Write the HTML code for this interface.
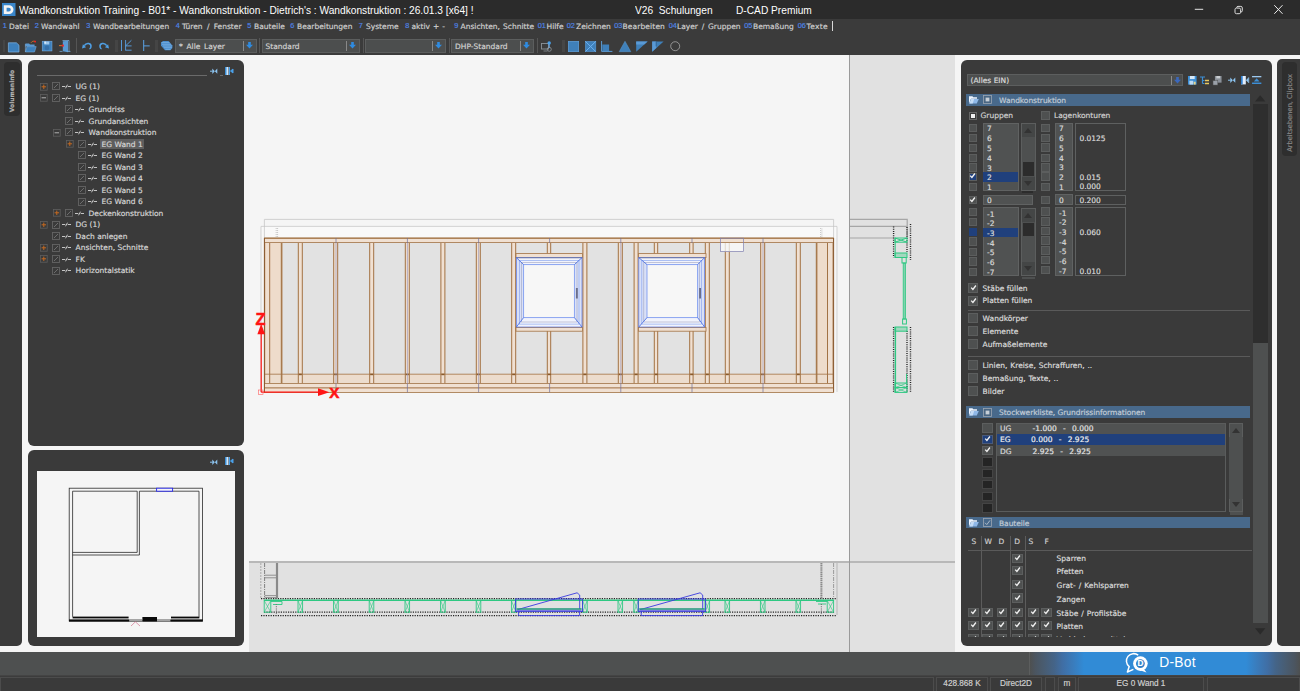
<!DOCTYPE html><html lang="de"><head><meta charset="utf-8"><title>Wandkonstruktion Training</title><style>
html,body{margin:0;padding:0}
body{width:1300px;height:691px;position:relative;overflow:hidden;background:#f5f5f5;font-family:"DejaVu Sans","Liberation Sans",sans-serif;font-size:7.5px;color:#d2d2d2}
.a{position:absolute}
.t{position:absolute;white-space:pre;line-height:10px;height:10px;margin-top:1px;-webkit-text-stroke:.18px}
.pnl{position:absolute;background:#3a3a3a;border-radius:6px}
.cb{position:absolute;background:#4e5050;border:1px solid #5c5e5e;box-sizing:border-box}
.cbd{position:absolute;background:#242424;border:1px solid #444;box-sizing:border-box}
.hd{position:absolute;background:#48698b;height:11.4px;left:966px;width:284px}
.num{color:#4f84e6;font-size:7.3px;font-family:'Liberation Sans',sans-serif}
.sep{position:absolute;background:#5a5a5a;height:1px}
.combo{position:absolute;background:#4c4e4e;border:1px solid #5c5e5e;box-sizing:border-box}
svg{position:absolute;overflow:visible}
.lb{position:absolute;background:#505252;border:1px solid #606262;box-sizing:border-box}
</style></head><body>
<div class="a" style="left:0;top:0;width:1300px;height:19px;background:#2b2b2b"></div>
<svg style="left:1.600px;top:2.900px" width="13.500" height="13" viewBox="0 0 13.500 13"><rect width="13.500" height="13" fill="#3a86ca"/><path d="M1.800 2.300h5.400a4.300 4.300 0 0 1 0 8.600h-5.400z M4.600 4.700v3.800h2.300a1.900 1.900 0 0 0 0-3.800z" fill="#f4f4f4" fill-rule="evenodd"/></svg>
<div class="t" style="left:19.4px;top:2px;font-family:'Liberation Sans',sans-serif;font-size:11.6px;color:#fff;line-height:14px;height:14px;transform:scaleX(.878);transform-origin:0 0;-webkit-text-stroke:0">Wandkonstruktion Training - B01* - Wandkonstruktion - Dietrich's : Wandkonstruktion : 26.01.3 [x64] !</div>
<div class="t" style="left:635px;top:2px;font-family:'Liberation Sans',sans-serif;font-size:11.6px;color:#fff;line-height:14px;height:14px;transform:scaleX(.878);transform-origin:0 0;-webkit-text-stroke:0">V26  Schulungen</div>
<div class="t" style="left:735.5px;top:2px;font-family:'Liberation Sans',sans-serif;font-size:11.6px;color:#fff;line-height:14px;height:14px;transform:scaleX(.878);transform-origin:0 0;-webkit-text-stroke:0">D-CAD Premium</div>
<svg style="left:1190px;top:0" width="110" height="19" viewBox="1190 0 110 19"><path d="M1194.800 9.300h8.400" stroke="#e4e4e4" stroke-width="1" fill="none"/><rect x="1235" y="8.100" width="5.600" height="5.600" rx="1.400" stroke="#dcdcdc" stroke-width="1" fill="none"/><path d="M1236.700 7.900v-.2a1.300 1.300 0 0 1 1.300-1.300h2.800a1.500 1.500 0 0 1 1.500 1.500v2.800a1.300 1.300 0 0 1-1.300 1.300h-.2" stroke="#dcdcdc" stroke-width="1" fill="none"/><path d="M1274.300 5.200l8.200 8.600M1282.500 5.200l-8.200 8.600" stroke="#ececec" stroke-width="1" fill="none"/></svg>
<div class="a" style="left:0;top:19px;width:1300px;height:35.700px;background:#3b3b3b"></div>
<div class="t num" style="left:2.7px;top:19.600px">1</div>
<div class="t" style="left:9px;top:20.5px;color:#cfcfcf;word-spacing:0px;letter-spacing:0px">Datei</div>
<div class="t num" style="left:34.7px;top:19.600px">2</div>
<div class="t" style="left:41px;top:20.5px;color:#cfcfcf;word-spacing:0px;letter-spacing:0px">Wandwahl</div>
<div class="t num" style="left:86.2px;top:19.600px">3</div>
<div class="t" style="left:93px;top:20.5px;color:#cfcfcf;word-spacing:0px;letter-spacing:0px">Wandbearbeitungen</div>
<div class="t num" style="left:175.7px;top:19.600px">4</div>
<div class="t" style="left:182px;top:20.5px;color:#cfcfcf;word-spacing:1.9px;letter-spacing:0px">Türen / Fenster</div>
<div class="t num" style="left:247.2px;top:19.600px">5</div>
<div class="t" style="left:254px;top:20.5px;color:#cfcfcf;word-spacing:0px;letter-spacing:0px">Bauteile</div>
<div class="t num" style="left:290.2px;top:19.600px">6</div>
<div class="t" style="left:297px;top:20.5px;color:#cfcfcf;word-spacing:0px;letter-spacing:0px">Bearbeitungen</div>
<div class="t num" style="left:358.7px;top:19.600px">7</div>
<div class="t" style="left:366px;top:20.5px;color:#cfcfcf;word-spacing:0px;letter-spacing:0px">Systeme</div>
<div class="t num" style="left:405.2px;top:19.600px">8</div>
<div class="t" style="left:411.5px;top:20.5px;color:#cfcfcf;word-spacing:0.65px;letter-spacing:0px">aktiv + -</div>
<div class="t num" style="left:454.2px;top:19.600px">9</div>
<div class="t" style="left:460.5px;top:20.5px;color:#cfcfcf;word-spacing:0.7px;letter-spacing:0px">Ansichten, Schnitte</div>
<div class="t num" style="left:537.7px;top:19.600px">01</div>
<div class="t" style="left:546.5px;top:20.5px;color:#cfcfcf;word-spacing:0px;letter-spacing:0px">Hilfe</div>
<div class="t num" style="left:566.7px;top:19.600px">02</div>
<div class="t" style="left:576px;top:20.5px;color:#cfcfcf;word-spacing:0px;letter-spacing:0px">Zeichnen</div>
<div class="t num" style="left:614.2px;top:19.600px">03</div>
<div class="t" style="left:622.5px;top:20.5px;color:#cfcfcf;word-spacing:0px;letter-spacing:0.13px">Bearbeiten</div>
<div class="t num" style="left:668.7px;top:19.600px">04</div>
<div class="t" style="left:677px;top:20.5px;color:#cfcfcf;word-spacing:1.4px;letter-spacing:0px">Layer / Gruppen</div>
<div class="t num" style="left:744.2px;top:19.600px">05</div>
<div class="t" style="left:753px;top:20.5px;color:#cfcfcf;word-spacing:0px;letter-spacing:0px">Bemaßung</div>
<div class="t num" style="left:797.7px;top:19.600px">06</div>
<div class="t" style="left:806.5px;top:20.5px;color:#cfcfcf;word-spacing:0px;letter-spacing:0.35px">Texte</div>
<div class="a" style="left:832px;top:21px;width:1px;height:10px;background:#d8d8d8"></div>
<div class="a" style="left:2.800px;top:40px;width:2.200px;height:11.500px;background:#454545"></div>
<svg style="left:8px;top:41.500px" width="11.400" height="10.400" viewBox="0 0 11.400 10.400"><path d="M.4 .800h8l2.600 2.400v6.800h-10.600z" fill="#3d80bc" stroke="#7fb4e4" stroke-width=".7"/></svg>
<svg style="left:25px;top:39.500px" width="12" height="12.500" viewBox="0 0 12 12.500"><path d="M.4 3.600h3.600l1 1h4.600v2h-9.200z" fill="#5a9ad4"/><path d="M.4 12l1.500-5.400h9.300l-1.700 5.400z" fill="#3d80bc" stroke="#7fb4e4" stroke-width=".5"/><path d="M.4 4v8" stroke="#7fb4e4" stroke-width=".6"/><path d="M6 2.800c1-1.600 2.600-2 4-1.400" stroke="#c8702a" stroke-width=".9" fill="none"/><rect x="9.200" y=".800" width="1.800" height="1.600" fill="#f02020"/></svg>
<svg style="left:42.300px;top:41px" width="10.200" height="10.200" viewBox="0 0 10.200 10.200"><rect x=".2" y=".2" width="9.800" height="9.800" fill="#3d80bc" stroke="#7fb4e4" stroke-width=".5"/><rect x="2.300" y=".5" width="5" height="3" fill="#9cc6ec"/><rect x="2.400" y=".6" width="1.400" height="2" fill="#e8f2fc"/><circle cx="5" cy="6.900" r="2.300" fill="#356fa8"/></svg>
<svg style="left:58.500px;top:39.500px" width="11.500" height="12.500" viewBox="0 0 11.500 12.500"><path d="M3.500 .500h6.500v11.400" fill="none" stroke="#7fb4e4" stroke-width=".7"/><path d="M3.800 1.200l5.200 -.5v11.600l-5.200-1z" fill="#5a9ad4"/><path d="M.5 11.400h3M8.500 11.400h3" stroke="#7fb4e4" stroke-width=".7"/><path d="M0 5.600h3" stroke="#c8702a" stroke-width="1.100"/><rect x="2.800" y="4.600" width="2" height="2" fill="#f02020"/></svg>
<div class="a" style="left:75.5px;top:38px;width:1px;height:15px;background:#555"></div>
<svg style="left:81.800px;top:42.400px" width="10" height="7" viewBox="0 0 10 7"><path d="M0 6.400l.9-4.200 3.200 3.100z" fill="#4f9fe4"/><path d="M2.300 3.700c2.200-3.700 7.400-2.600 6.600 1.400-.2 1-.8 1.500-1.500 1.600" stroke="#4f9fe4" stroke-width="1.500" fill="none"/></svg>
<svg style="left:98.800px;top:42.400px" width="10" height="7" viewBox="0 0 10 7"><g transform="translate(10 0) scale(-1 1)"><path d="M0 6.400l.9-4.200 3.200 3.100z" fill="#4f9fe4"/><path d="M2.300 3.700c2.200-3.700 7.400-2.600 6.600 1.400-.2 1-.8 1.500-1.500 1.600" stroke="#4f9fe4" stroke-width="1.500" fill="none"/></g></svg>
<div class="a" style="left:115.400px;top:40px;width:2.200px;height:11.500px;background:#454545"></div>
<svg style="left:121px;top:40.400px" width="11" height="11" viewBox="0 0 11 11"><path d="M.5 0v11M4.600 0v10.500M4.600 10.200h6M4.600 5.900h6M4.600 5.900l5.800-5.600" stroke="#5aa2e4" stroke-width=".9" fill="none"/></svg>
<svg style="left:142.600px;top:40.400px" width="7" height="11" viewBox="0 0 7 11"><path d="M.7 0v11M.7 5.900h6" stroke="#5aa2e4" stroke-width="1" fill="none"/></svg>
<div class="a" style="left:155.400px;top:40px;width:2.200px;height:11.500px;background:#454545"></div>
<svg style="left:160.600px;top:41.200px" width="11.400" height="9.200" viewBox="0 0 11.400 9.200"><path d="M0 1.400l2-1.400h5.600l3.800 4.400v2.600l-2 2.200h-5.400l-4-4.400z" fill="#4a8ccc"/><path d="M.5 1.600h8M1 3.300h9M2 5h9.300M3 6.700h8M4.500 8.400h5" stroke="#8fc0ec" stroke-width=".55"/></svg>
<div class="a" style="left:259.3px;top:38px;width:1px;height:15px;background:#555"></div>
<div class="a" style="left:362.8px;top:38px;width:1px;height:15px;background:#555"></div>
<div class="a" style="left:448.5px;top:38px;width:1px;height:15px;background:#555"></div>
<div class="a" style="left:536.5px;top:38px;width:1px;height:15px;background:#555"></div>
<div class="combo" style="left:175px;top:39px;width:82px;height:13.5px"></div>
<div class="t" style="left:179px;top:40.5px;color:#d2d2d2;word-spacing:1.300px">* Alle Layer</div>
<div class="a" style="left:243px;top:41px;width:1px;height:9.5px;background:#888"></div>
<svg style="left:246.4px;top:42.300px" width="7" height="7" viewBox="0 0 8 8"><path d="M2.5 0h3v3.2h2.5l-4 4.3-4-4.3h2.5z" fill="#2f8be0"/></svg>
<div class="combo" style="left:261.5px;top:39px;width:98.5px;height:13.5px"></div>
<div class="t" style="left:265.5px;top:40.5px;color:#d2d2d2;word-spacing:1.300px">Standard</div>
<div class="a" style="left:346.0px;top:41px;width:1px;height:9.5px;background:#888"></div>
<svg style="left:349.4px;top:42.300px" width="7" height="7" viewBox="0 0 8 8"><path d="M2.5 0h3v3.2h2.5l-4 4.3-4-4.3h2.5z" fill="#2f8be0"/></svg>
<div class="combo" style="left:365px;top:39px;width:81px;height:13.5px"></div>
<div class="t" style="left:369px;top:40.5px;color:#d2d2d2;word-spacing:1.300px"></div>
<div class="a" style="left:432px;top:41px;width:1px;height:9.5px;background:#888"></div>
<svg style="left:435.4px;top:42.300px" width="7" height="7" viewBox="0 0 8 8"><path d="M2.5 0h3v3.2h2.5l-4 4.3-4-4.3h2.5z" fill="#2f8be0"/></svg>
<div class="combo" style="left:451px;top:39px;width:83px;height:13.5px"></div>
<div class="t" style="left:455px;top:40.5px;color:#d2d2d2;word-spacing:1.300px">DHP-Standard</div>
<div class="a" style="left:520px;top:41px;width:1px;height:9.5px;background:#888"></div>
<svg style="left:523.4px;top:42.300px" width="7" height="7" viewBox="0 0 8 8"><path d="M2.5 0h3v3.2h2.5l-4 4.3-4-4.3h2.5z" fill="#2f8be0"/></svg>
<svg style="left:540.800px;top:41px" width="11.500" height="11" viewBox="0 0 11.500 11"><rect x=".5" y="2.500" width="7" height="5.500" fill="none" stroke="#8a9298" stroke-width=".9"/><path d="M2.500 10h4" stroke="#8a9298" stroke-width=".8"/><circle cx="8.300" cy="8.300" r="2" fill="none" stroke="#9aa2a8" stroke-width=".7"/><path d="M8.200 1v6" stroke="#6aaae8" stroke-width="1"/><circle cx="8.200" cy="2" r="1.700" fill="#4aa0e8"/></svg>
<div class="a" style="left:562.400px;top:40px;width:2.200px;height:11.500px;background:#464646"></div>
<svg style="left:568px;top:40.800px" width="11" height="11" viewBox="0 0 11 11"><rect x=".4" y=".4" width="10.200" height="10.200" fill="#3f80ba" stroke="#5c9cd6" stroke-width=".8"/></svg>
<svg style="left:584.800px;top:40.800px" width="11.200" height="11" viewBox="0 0 11.200 11"><rect x=".4" y=".4" width="10.400" height="10.200" fill="#3f80ba" stroke="#5c9cd6" stroke-width=".6"/><path d="M.4 .4l10.400 10.200M10.800 .4l-10.400 10.200" stroke="#6cb2f2" stroke-width="1"/></svg>
<svg style="left:601.300px;top:41px" width="11.500" height="11" viewBox="0 0 11.500 11"><path d="M.6 0v10.400h10.800" stroke="#5c9cd6" stroke-width="1" fill="none"/><rect x="1.300" y="3.500" width="6.800" height="6.500" fill="#3f80ba"/></svg>
<svg style="left:618.600px;top:40.800px" width="12" height="11" viewBox="0 0 12 11"><path d="M6 .3l5.800 10.400h-11.600z" fill="#3f80ba" stroke="#5c9cd6" stroke-width=".5"/></svg>
<svg style="left:635.500px;top:40.800px" width="11.800" height="11" viewBox="0 0 11.800 11"><path d="M.2 .4h11.400l-11.400 10.400z" fill="#3f80ba"/><path d="M.2 .4h11.400l-3.500 3.200h-7.900z" fill="#5a9ad6"/></svg>
<svg style="left:652.400px;top:40.800px" width="11.800" height="11" viewBox="0 0 11.800 11"><path d="M.2 .4h11.400l-11.400 10.400z" fill="#3f80ba"/><path d="M.2 .4h4v6.500l-4 3.800z" fill="#5a9ad6"/><path d="M4.200 .4v5" stroke="#2c5a88" stroke-width=".8"/></svg>
<svg style="left:669.800px;top:41px" width="10.400" height="10.400" viewBox="0 0 10.400 10.400"><circle cx="5.200" cy="5.200" r="4.500" fill="none" stroke="#9c9c9c" stroke-width=".9"/></svg>
<div class="a" style="left:0;top:59px;width:22.4px;height:587px;background:#3a3a3a;border-radius:0 5px 5px 0"></div>
<div class="a" style="left:3.5px;top:61.5px;width:16px;height:54.5px;background:#2e2e2e;border-radius:4px"></div>
<div class="t" style="left:-14px;top:84.5px;width:51px;text-align:center;transform:rotate(-90deg);font-weight:bold;color:#b4b4b4;font-size:6px">Volumeninfo</div>
<div class="pnl" style="left:28.4px;top:60.2px;width:215.6px;height:385.8px"></div>
<div class="sep" style="left:36.5px;top:75px;width:170.5px;background:#6a6a6a"></div>
<svg style="left:209.8px;top:68.4px" width="9" height="7" viewBox="0 0 9 7"><path d="M0 3.200h2.500" stroke="#8cc4f0" stroke-width="1"/><path d="M2.300 .400l2.500 2.800-2.500 2.800zM7.300 .600l-2.500 2.600 2.500 2.600z" fill="#8cc4f0"/></svg>
<svg style="left:225.0px;top:66.80000000000001px" width="9" height="9" viewBox="0 0 9 9"><rect x="0" y="0" width="3.5" height="8" fill="#cfe6fa"/><rect x="0" y="0" width="1.5" height="8" fill="#3d8fd6"/><path d="M4.5 0v8M8 2l-2.5 2 2.5 2z" stroke="#4aa0e8" stroke-width="1" fill="#4aa0e8"/></svg>
<div class="sep" style="left:220px;top:75px;width:2.5px;background:#6a6a6a"></div>
<svg style="left:39.8px;top:82.60000000000001px" width="7.600" height="7.600" viewBox="0 0 7.600 7.600"><rect x=".4" y=".4" width="6.800" height="6.800" fill="none" stroke="#5e5e5e" stroke-width=".8"/><path d="M1.600 3.800h4.400" stroke="#c86a20" stroke-width="1"/><path d="M3.800 1.600v4.400" stroke="#c86a20" stroke-width="1"/></svg>
<svg style="left:52px;top:82.4px" width="8" height="8" viewBox="0 0 8 8"><rect x=".5" y=".5" width="7" height="7" fill="none" stroke="#646464" stroke-width=".9"/><path d="M2 6l4-4" stroke="#7a7a7a" stroke-width=".8"/></svg>
<svg style="left:62px;top:84.10000000000001px" width="9" height="5" viewBox="0 0 9 5"><path d="M0 2.500h3.300M5.700 2.500h3.300M3.500 4.300l2-3.600" stroke="#d4d4d4" stroke-width=".9" fill="none"/></svg>
<div class="t" style="left:75.6px;top:81.2px;color:#d6d6d6">UG (1)</div>
<svg style="left:39.8px;top:94.11000000000001px" width="7.600" height="7.600" viewBox="0 0 7.600 7.600"><rect x=".4" y=".4" width="6.800" height="6.800" fill="none" stroke="#5e5e5e" stroke-width=".8"/><path d="M1.600 3.800h4.400" stroke="#b4b4b4" stroke-width="1"/></svg>
<svg style="left:52px;top:93.91000000000001px" width="8" height="8" viewBox="0 0 8 8"><rect x=".5" y=".5" width="7" height="7" fill="none" stroke="#646464" stroke-width=".9"/><path d="M2 6l4-4" stroke="#7a7a7a" stroke-width=".8"/></svg>
<svg style="left:62px;top:95.61000000000001px" width="9" height="5" viewBox="0 0 9 5"><path d="M0 2.500h3.300M5.700 2.500h3.300M3.500 4.300l2-3.600" stroke="#d4d4d4" stroke-width=".9" fill="none"/></svg>
<div class="t" style="left:75.6px;top:92.71000000000001px;color:#d6d6d6">EG (1)</div>
<svg style="left:65px;top:105.42px" width="8" height="8" viewBox="0 0 8 8"><rect x=".5" y=".5" width="7" height="7" fill="none" stroke="#646464" stroke-width=".9"/><path d="M2 6l4-4" stroke="#7a7a7a" stroke-width=".8"/></svg>
<svg style="left:75px;top:107.12px" width="9" height="5" viewBox="0 0 9 5"><path d="M0 2.500h3.300M5.700 2.500h3.300M3.500 4.300l2-3.600" stroke="#d4d4d4" stroke-width=".9" fill="none"/></svg>
<div class="t" style="left:88.6px;top:104.22px;color:#d6d6d6">Grundriss</div>
<svg style="left:65px;top:116.93px" width="8" height="8" viewBox="0 0 8 8"><rect x=".5" y=".5" width="7" height="7" fill="none" stroke="#646464" stroke-width=".9"/><path d="M2 6l4-4" stroke="#7a7a7a" stroke-width=".8"/></svg>
<svg style="left:75px;top:118.63000000000001px" width="9" height="5" viewBox="0 0 9 5"><path d="M0 2.500h3.300M5.700 2.500h3.300M3.500 4.300l2-3.600" stroke="#d4d4d4" stroke-width=".9" fill="none"/></svg>
<div class="t" style="left:88.6px;top:115.73px;color:#d6d6d6">Grundansichten</div>
<svg style="left:52.8px;top:128.64px" width="7.600" height="7.600" viewBox="0 0 7.600 7.600"><rect x=".4" y=".4" width="6.800" height="6.800" fill="none" stroke="#5e5e5e" stroke-width=".8"/><path d="M1.600 3.800h4.400" stroke="#b4b4b4" stroke-width="1"/></svg>
<svg style="left:65px;top:128.44px" width="8" height="8" viewBox="0 0 8 8"><rect x=".5" y=".5" width="7" height="7" fill="none" stroke="#646464" stroke-width=".9"/><path d="M2 6l4-4" stroke="#7a7a7a" stroke-width=".8"/></svg>
<svg style="left:75px;top:130.14px" width="9" height="5" viewBox="0 0 9 5"><path d="M0 2.500h3.300M5.700 2.500h3.300M3.500 4.300l2-3.600" stroke="#d4d4d4" stroke-width=".9" fill="none"/></svg>
<div class="t" style="left:88.6px;top:127.24px;color:#d6d6d6">Wandkonstruktion</div>
<svg style="left:65.8px;top:140.14999999999998px" width="7.600" height="7.600" viewBox="0 0 7.600 7.600"><rect x=".4" y=".4" width="6.800" height="6.800" fill="none" stroke="#5e5e5e" stroke-width=".8"/><path d="M1.600 3.800h4.400" stroke="#c86a20" stroke-width="1"/><path d="M3.800 1.600v4.400" stroke="#c86a20" stroke-width="1"/></svg>
<svg style="left:78px;top:139.95px" width="8" height="8" viewBox="0 0 8 8"><rect x=".5" y=".5" width="7" height="7" fill="none" stroke="#646464" stroke-width=".9"/><path d="M2 6l4-4" stroke="#7a7a7a" stroke-width=".8"/></svg>
<svg style="left:88px;top:141.64999999999998px" width="9" height="5" viewBox="0 0 9 5"><path d="M0 2.500h3.300M5.700 2.500h3.300M3.500 4.300l2-3.600" stroke="#d4d4d4" stroke-width=".9" fill="none"/></svg>
<div class="a" style="left:100.4px;top:138.75px;width:43.6px;height:10.6px;background:#5e5e5e"></div>
<div class="t" style="left:101.6px;top:138.75px;color:#d6d6d6">EG Wand 1</div>
<svg style="left:78px;top:151.46px" width="8" height="8" viewBox="0 0 8 8"><rect x=".5" y=".5" width="7" height="7" fill="none" stroke="#646464" stroke-width=".9"/><path d="M2 6l4-4" stroke="#7a7a7a" stroke-width=".8"/></svg>
<svg style="left:88px;top:153.16px" width="9" height="5" viewBox="0 0 9 5"><path d="M0 2.500h3.300M5.700 2.500h3.300M3.500 4.300l2-3.600" stroke="#d4d4d4" stroke-width=".9" fill="none"/></svg>
<div class="t" style="left:101.6px;top:150.26000000000002px;color:#d6d6d6">EG Wand 2</div>
<svg style="left:78px;top:162.97px" width="8" height="8" viewBox="0 0 8 8"><rect x=".5" y=".5" width="7" height="7" fill="none" stroke="#646464" stroke-width=".9"/><path d="M2 6l4-4" stroke="#7a7a7a" stroke-width=".8"/></svg>
<svg style="left:88px;top:164.67px" width="9" height="5" viewBox="0 0 9 5"><path d="M0 2.500h3.300M5.700 2.500h3.300M3.500 4.300l2-3.600" stroke="#d4d4d4" stroke-width=".9" fill="none"/></svg>
<div class="t" style="left:101.6px;top:161.77px;color:#d6d6d6">EG Wand 3</div>
<svg style="left:78px;top:174.48000000000002px" width="8" height="8" viewBox="0 0 8 8"><rect x=".5" y=".5" width="7" height="7" fill="none" stroke="#646464" stroke-width=".9"/><path d="M2 6l4-4" stroke="#7a7a7a" stroke-width=".8"/></svg>
<svg style="left:88px;top:176.18px" width="9" height="5" viewBox="0 0 9 5"><path d="M0 2.500h3.300M5.700 2.500h3.300M3.500 4.300l2-3.600" stroke="#d4d4d4" stroke-width=".9" fill="none"/></svg>
<div class="t" style="left:101.6px;top:173.28000000000003px;color:#d6d6d6">EG Wand 4</div>
<svg style="left:78px;top:185.99px" width="8" height="8" viewBox="0 0 8 8"><rect x=".5" y=".5" width="7" height="7" fill="none" stroke="#646464" stroke-width=".9"/><path d="M2 6l4-4" stroke="#7a7a7a" stroke-width=".8"/></svg>
<svg style="left:88px;top:187.69px" width="9" height="5" viewBox="0 0 9 5"><path d="M0 2.500h3.300M5.700 2.500h3.300M3.500 4.300l2-3.600" stroke="#d4d4d4" stroke-width=".9" fill="none"/></svg>
<div class="t" style="left:101.6px;top:184.79000000000002px;color:#d6d6d6">EG Wand 5</div>
<svg style="left:78px;top:197.5px" width="8" height="8" viewBox="0 0 8 8"><rect x=".5" y=".5" width="7" height="7" fill="none" stroke="#646464" stroke-width=".9"/><path d="M2 6l4-4" stroke="#7a7a7a" stroke-width=".8"/></svg>
<svg style="left:88px;top:199.2px" width="9" height="5" viewBox="0 0 9 5"><path d="M0 2.500h3.300M5.700 2.500h3.300M3.500 4.300l2-3.600" stroke="#d4d4d4" stroke-width=".9" fill="none"/></svg>
<div class="t" style="left:101.6px;top:196.3px;color:#d6d6d6">EG Wand 6</div>
<svg style="left:52.8px;top:209.20999999999998px" width="7.600" height="7.600" viewBox="0 0 7.600 7.600"><rect x=".4" y=".4" width="6.800" height="6.800" fill="none" stroke="#5e5e5e" stroke-width=".8"/><path d="M1.600 3.800h4.400" stroke="#c86a20" stroke-width="1"/><path d="M3.800 1.600v4.400" stroke="#c86a20" stroke-width="1"/></svg>
<svg style="left:65px;top:209.01px" width="8" height="8" viewBox="0 0 8 8"><rect x=".5" y=".5" width="7" height="7" fill="none" stroke="#646464" stroke-width=".9"/><path d="M2 6l4-4" stroke="#7a7a7a" stroke-width=".8"/></svg>
<svg style="left:75px;top:210.70999999999998px" width="9" height="5" viewBox="0 0 9 5"><path d="M0 2.500h3.300M5.700 2.500h3.300M3.500 4.300l2-3.600" stroke="#d4d4d4" stroke-width=".9" fill="none"/></svg>
<div class="t" style="left:88.6px;top:207.81px;color:#d6d6d6">Deckenkonstruktion</div>
<svg style="left:39.8px;top:220.72px" width="7.600" height="7.600" viewBox="0 0 7.600 7.600"><rect x=".4" y=".4" width="6.800" height="6.800" fill="none" stroke="#5e5e5e" stroke-width=".8"/><path d="M1.600 3.800h4.400" stroke="#c86a20" stroke-width="1"/><path d="M3.800 1.600v4.400" stroke="#c86a20" stroke-width="1"/></svg>
<svg style="left:52px;top:220.52px" width="8" height="8" viewBox="0 0 8 8"><rect x=".5" y=".5" width="7" height="7" fill="none" stroke="#646464" stroke-width=".9"/><path d="M2 6l4-4" stroke="#7a7a7a" stroke-width=".8"/></svg>
<svg style="left:62px;top:222.22px" width="9" height="5" viewBox="0 0 9 5"><path d="M0 2.500h3.300M5.700 2.500h3.300M3.500 4.300l2-3.600" stroke="#d4d4d4" stroke-width=".9" fill="none"/></svg>
<div class="t" style="left:75.6px;top:219.32000000000002px;color:#d6d6d6">DG (1)</div>
<svg style="left:52px;top:232.03px" width="8" height="8" viewBox="0 0 8 8"><rect x=".5" y=".5" width="7" height="7" fill="none" stroke="#646464" stroke-width=".9"/><path d="M2 6l4-4" stroke="#7a7a7a" stroke-width=".8"/></svg>
<svg style="left:62px;top:233.73px" width="9" height="5" viewBox="0 0 9 5"><path d="M0 2.500h3.300M5.700 2.500h3.300M3.500 4.300l2-3.600" stroke="#d4d4d4" stroke-width=".9" fill="none"/></svg>
<div class="t" style="left:75.6px;top:230.83px;color:#d6d6d6">Dach anlegen</div>
<svg style="left:39.8px;top:243.73999999999998px" width="7.600" height="7.600" viewBox="0 0 7.600 7.600"><rect x=".4" y=".4" width="6.800" height="6.800" fill="none" stroke="#5e5e5e" stroke-width=".8"/><path d="M1.600 3.800h4.400" stroke="#c86a20" stroke-width="1"/><path d="M3.800 1.600v4.400" stroke="#c86a20" stroke-width="1"/></svg>
<svg style="left:52px;top:243.54px" width="8" height="8" viewBox="0 0 8 8"><rect x=".5" y=".5" width="7" height="7" fill="none" stroke="#646464" stroke-width=".9"/><path d="M2 6l4-4" stroke="#7a7a7a" stroke-width=".8"/></svg>
<svg style="left:62px;top:245.23999999999998px" width="9" height="5" viewBox="0 0 9 5"><path d="M0 2.500h3.300M5.700 2.500h3.300M3.500 4.300l2-3.600" stroke="#d4d4d4" stroke-width=".9" fill="none"/></svg>
<div class="t" style="left:75.6px;top:242.34px;color:#d6d6d6">Ansichten, Schnitte</div>
<svg style="left:39.8px;top:255.25px" width="7.600" height="7.600" viewBox="0 0 7.600 7.600"><rect x=".4" y=".4" width="6.800" height="6.800" fill="none" stroke="#5e5e5e" stroke-width=".8"/><path d="M1.600 3.800h4.400" stroke="#c86a20" stroke-width="1"/><path d="M3.800 1.600v4.400" stroke="#c86a20" stroke-width="1"/></svg>
<svg style="left:52px;top:255.05px" width="8" height="8" viewBox="0 0 8 8"><rect x=".5" y=".5" width="7" height="7" fill="none" stroke="#646464" stroke-width=".9"/><path d="M2 6l4-4" stroke="#7a7a7a" stroke-width=".8"/></svg>
<svg style="left:62px;top:256.75px" width="9" height="5" viewBox="0 0 9 5"><path d="M0 2.500h3.300M5.700 2.500h3.300M3.500 4.300l2-3.600" stroke="#d4d4d4" stroke-width=".9" fill="none"/></svg>
<div class="t" style="left:75.6px;top:253.85000000000002px;color:#d6d6d6">FK</div>
<svg style="left:52px;top:266.56px" width="8" height="8" viewBox="0 0 8 8"><rect x=".5" y=".5" width="7" height="7" fill="none" stroke="#646464" stroke-width=".9"/><path d="M2 6l4-4" stroke="#7a7a7a" stroke-width=".8"/></svg>
<svg style="left:62px;top:268.26px" width="9" height="5" viewBox="0 0 9 5"><path d="M0 2.500h3.300M5.700 2.500h3.300M3.500 4.300l2-3.600" stroke="#d4d4d4" stroke-width=".9" fill="none"/></svg>
<div class="t" style="left:75.6px;top:265.36px;color:#d6d6d6">Horizontalstatik</div>
<div class="pnl" style="left:28.4px;top:450px;width:215.6px;height:196px"></div>
<svg style="left:209.8px;top:458.8px" width="9" height="7" viewBox="0 0 9 7"><path d="M0 3.200h2.500" stroke="#8cc4f0" stroke-width="1"/><path d="M2.300 .400l2.500 2.800-2.500 2.800zM7.300 .600l-2.500 2.600 2.500 2.600z" fill="#8cc4f0"/></svg>
<svg style="left:225.0px;top:457.2px" width="9" height="9" viewBox="0 0 9 9"><rect x="0" y="0" width="3.5" height="8" fill="#cfe6fa"/><rect x="0" y="0" width="1.5" height="8" fill="#3d8fd6"/><path d="M4.5 0v8M8 2l-2.5 2 2.5 2z" stroke="#4aa0e8" stroke-width="1" fill="#4aa0e8"/></svg>
<div class="a" style="left:37px;top:471.2px;width:198.2px;height:165.8px;background:#f5f5f5"></div>
<svg style="left:0;top:0" width="260" height="691" viewBox="0 0 260 691"><g fill="none" stroke="#2a2a2a" stroke-width=".8"><rect x="69.2" y="488.2" width="133.4" height="132.8"/><path d="M72.6 616.8V491.2h64.6v61.2h-64.6M72.6 555h66.8V491.2h59.6v125.6"/></g><rect x="156.6" y="488.2" width="16" height="3" fill="#f5f5f5" stroke="#2222ee" stroke-width=".9"/><g fill="#0a0a0a"><rect x="69" y="619.4" width="60.2" height="2.2"/><rect x="72.6" y="616.6" width="56" height="1.8"/><rect x="142.4" y="617" width="14.6" height="4.6"/><rect x="170.4" y="619.4" width="32.4" height="2.2"/><rect x="171" y="616.6" width="28.4" height="1.8"/></g><path d="M129.2 619.5h13.2M157 619.5h13.4M129.2 621.5h13.2M157 621.5h13.4" stroke="#555" stroke-width=".5"/><path d="M131 626l4.4-4.2 4.6 4.2" stroke="#d06080" stroke-width=".6" fill="none"/></svg><div class="a" style="left:249px;top:561.5px;width:600.5px;height:90.5px;background:#e1e1e1"></div>
<div class="a" style="left:849.5px;top:55px;width:105.5px;height:597px;background:#e1e1e1"></div>
<div class="a" style="left:249px;top:561px;width:706px;height:2px;background:#b8b8b8"></div>
<div class="a" style="left:849px;top:55px;width:1px;height:597px;background:#9a9a9a"></div>
<svg style="left:0;top:0" width="1300" height="691" viewBox="0 0 1300 691"><rect x="261" y="226.400" width="576" height="11.400" fill="#f9f9f9"/><g fill="none" stroke="#b4b4b4" stroke-width=".7"><path d="M264.4 238V219.4H833.6V238" stroke="#c2c2c2"/><path d="M261 392V226.4H837V392" stroke="#c4c4c4"/><path d="M276.200 228v10M277.600 228v10M820.600 228v10M821.900 228.500v9" stroke-dasharray="1 1" stroke="#b0b0b0"/></g><rect x="264.4" y="238" width="569.2" height="154.39999999999998" fill="#e2e2e2"/><rect x="264.4" y="243" width="17.8" height="140.4" fill="#eedccb"/><rect x="816" y="243" width="17.6" height="140.4" fill="#eedccb"/><rect x="264.4" y="374" width="569.2" height="9.4" fill="#ecdccd"/><rect x="298" y="243" width="4.6" height="140.39999999999998" fill="#f0e0d2"/><path d="M298.3 243V383.4M302.3 243V383.4" stroke="#a27244" stroke-width="1" fill="none"/><rect x="333.4" y="243" width="4.6" height="140.39999999999998" fill="#f0e0d2"/><path d="M333.7 243V383.4M337.7 243V383.4" stroke="#a27244" stroke-width="1" fill="none"/><rect x="369.4" y="243" width="4.6" height="140.39999999999998" fill="#f0e0d2"/><path d="M369.7 243V383.4M373.7 243V383.4" stroke="#a27244" stroke-width="1" fill="none"/><rect x="405" y="243" width="4.6" height="140.39999999999998" fill="#f0e0d2"/><path d="M405.3 243V383.4M409.3 243V383.4" stroke="#a27244" stroke-width="1" fill="none"/><rect x="440.6" y="243" width="4.6" height="140.39999999999998" fill="#f0e0d2"/><path d="M440.90000000000003 243V383.4M444.90000000000003 243V383.4" stroke="#a27244" stroke-width="1" fill="none"/><rect x="476" y="243" width="4.6" height="140.39999999999998" fill="#f0e0d2"/><path d="M476.3 243V383.4M480.3 243V383.4" stroke="#a27244" stroke-width="1" fill="none"/><rect x="618" y="243" width="4.6" height="140.39999999999998" fill="#f0e0d2"/><path d="M618.3 243V383.4M622.3000000000001 243V383.4" stroke="#a27244" stroke-width="1" fill="none"/><rect x="725" y="243" width="4.6" height="140.39999999999998" fill="#f0e0d2"/><path d="M725.3 243V383.4M729.3000000000001 243V383.4" stroke="#a27244" stroke-width="1" fill="none"/><rect x="760.4" y="243" width="4.6" height="140.39999999999998" fill="#f0e0d2"/><path d="M760.6999999999999 243V383.4M764.7 243V383.4" stroke="#a27244" stroke-width="1" fill="none"/><rect x="796" y="243" width="4.6" height="140.39999999999998" fill="#f0e0d2"/><path d="M796.3 243V383.4M800.3000000000001 243V383.4" stroke="#a27244" stroke-width="1" fill="none"/><rect x="264.4" y="243" width="5.6" height="140.39999999999998" fill="#f0e0d2"/><path d="M264.7 243V383.4M269.7 243V383.4" stroke="#a27244" stroke-width="1" fill="none"/><rect x="281" y="243" width="1.2" height="140.39999999999998" fill="#f0e0d2"/><path d="M281.3 243V383.4M281.9 243V383.4" stroke="#a27244" stroke-width="1" fill="none"/><rect x="827.2" y="243" width="6.2" height="140.39999999999998" fill="#f0e0d2"/><path d="M827.5 243V383.4M833.1000000000001 243V383.4" stroke="#a27244" stroke-width="1" fill="none"/><rect x="816" y="243" width="1.2" height="140.39999999999998" fill="#f0e0d2"/><path d="M816.3 243V383.4M816.9000000000001 243V383.4" stroke="#a27244" stroke-width="1" fill="none"/><rect x="511.4" y="243" width="4.6" height="140.39999999999998" fill="#f0e0d2"/><path d="M511.7 243V383.4M515.7 243V383.4" stroke="#a27244" stroke-width="1" fill="none"/><rect x="582.6" y="243" width="4.6" height="140.39999999999998" fill="#f0e0d2"/><path d="M582.9 243V383.4M586.9000000000001 243V383.4" stroke="#a27244" stroke-width="1" fill="none"/><rect x="633.8" y="243" width="4.6" height="140.39999999999998" fill="#f0e0d2"/><path d="M634.0999999999999 243V383.4M638.1 243V383.4" stroke="#a27244" stroke-width="1" fill="none"/><rect x="705" y="243" width="4.6" height="140.39999999999998" fill="#f0e0d2"/><path d="M705.3 243V383.4M709.3000000000001 243V383.4" stroke="#a27244" stroke-width="1" fill="none"/><rect x="547" y="243" width="4" height="10.599999999999994" fill="#f0e0d2"/><path d="M547.3 243V253.6M550.7 243V253.6" stroke="#a27244" stroke-width="1" fill="none"/><rect x="547" y="331" width="4" height="52.39999999999998" fill="#f0e0d2"/><path d="M547.3 331V383.4M550.7 331V383.4" stroke="#a27244" stroke-width="1" fill="none"/><rect x="654" y="243" width="4" height="10.599999999999994" fill="#f0e0d2"/><path d="M654.3 243V253.6M657.7 243V253.6" stroke="#a27244" stroke-width="1" fill="none"/><rect x="654" y="331" width="4" height="52.39999999999998" fill="#f0e0d2"/><path d="M654.3 331V383.4M657.7 331V383.4" stroke="#a27244" stroke-width="1" fill="none"/><rect x="689.4" y="243" width="4" height="10.599999999999994" fill="#f0e0d2"/><path d="M689.6999999999999 243V253.6M693.1 243V253.6" stroke="#a27244" stroke-width="1" fill="none"/><rect x="689.4" y="331" width="4" height="52.39999999999998" fill="#f0e0d2"/><path d="M689.6999999999999 331V383.4M693.1 331V383.4" stroke="#a27244" stroke-width="1" fill="none"/><rect x="516" y="253.6" width="66.60000000000002" height="4.000000000000028" fill="#f0e0d2" stroke="#a27244" stroke-width=".8"/><rect x="516" y="327.4" width="66.60000000000002" height="3.8000000000000114" fill="#f0e0d2" stroke="#a27244" stroke-width=".8"/><rect x="638.4" y="253.6" width="67.60000000000002" height="4.000000000000028" fill="#f0e0d2" stroke="#a27244" stroke-width=".8"/><rect x="638.4" y="327.4" width="67.60000000000002" height="3.8000000000000114" fill="#f0e0d2" stroke="#a27244" stroke-width=".8"/><rect x="264.4" y="238" width="569.2" height="4.600" fill="#f0e0d2" stroke="#a27244" stroke-width=".8"/><path d="M264.4 238.2H833.6" stroke="#a07040" stroke-width="1.100"/><rect x="264.4" y="383.4" width="569.2" height="4.6" fill="#f0e0d2" stroke="#a27244" stroke-width=".8"/><rect x="264.4" y="388" width="569.2" height="4.4" fill="#f0e0d2" stroke="#a27244" stroke-width=".8"/><path d="M264.4 374.2H833.6" stroke="#a27244" stroke-width=".8"/><rect x="298.8" y="373.6" width="3" height="1.6" fill="#8a5a2a"/><rect x="334.2" y="373.6" width="3" height="1.6" fill="#8a5a2a"/><rect x="370.2" y="373.6" width="3" height="1.6" fill="#8a5a2a"/><rect x="405.8" y="373.6" width="3" height="1.6" fill="#8a5a2a"/><rect x="441.40000000000003" y="373.6" width="3" height="1.6" fill="#8a5a2a"/><rect x="476.8" y="373.6" width="3" height="1.6" fill="#8a5a2a"/><rect x="512.1999999999999" y="373.6" width="3" height="1.6" fill="#8a5a2a"/><rect x="547.8" y="373.6" width="3" height="1.6" fill="#8a5a2a"/><rect x="583.4" y="373.6" width="3" height="1.6" fill="#8a5a2a"/><rect x="618.8" y="373.6" width="3" height="1.6" fill="#8a5a2a"/><rect x="634.5999999999999" y="373.6" width="3" height="1.6" fill="#8a5a2a"/><rect x="654.8" y="373.6" width="3" height="1.6" fill="#8a5a2a"/><rect x="690.1999999999999" y="373.6" width="3" height="1.6" fill="#8a5a2a"/><rect x="705.8" y="373.6" width="3" height="1.6" fill="#8a5a2a"/><rect x="725.8" y="373.6" width="3" height="1.6" fill="#8a5a2a"/><rect x="761.1999999999999" y="373.6" width="3" height="1.6" fill="#8a5a2a"/><rect x="796.8" y="373.6" width="3" height="1.6" fill="#8a5a2a"/><path d="M336 238V243M336 383.4V392.4" stroke="#70709c" stroke-width=".7"/><path d="M407.4 238V243M407.4 383.4V392.4" stroke="#70709c" stroke-width=".7"/><path d="M478.6 238V243M478.6 383.4V392.4" stroke="#70709c" stroke-width=".7"/><path d="M549.6 238V243M549.6 383.4V392.4" stroke="#70709c" stroke-width=".7"/><path d="M620.8 238V243M620.8 383.4V392.4" stroke="#70709c" stroke-width=".7"/><path d="M692 238V243M692 383.4V392.4" stroke="#70709c" stroke-width=".7"/><path d="M763 238V243M763 383.4V392.4" stroke="#70709c" stroke-width=".7"/><path d="M336 243V383.4" stroke="#9c98bc" stroke-width=".7"/><path d="M407.4 243V383.4" stroke="#9c98bc" stroke-width=".7"/><path d="M478.6 243V383.4" stroke="#9c98bc" stroke-width=".7"/><path d="M620.8 243V383.4" stroke="#9c98bc" stroke-width=".7"/><path d="M763 243V383.4" stroke="#9c98bc" stroke-width=".7"/><path d="M264.4 238V392.4M833.6 238V392.4" stroke="#8a5a30" stroke-width="1"/><rect x="720.4" y="243" width="23.2" height="8.4" fill="#f5f5f5"/><rect x="720.4" y="238.2" width="23.2" height="13.2" fill="none" stroke="#8080b0" stroke-width=".7"/><path d="M725.3 243v8.4M729.3 243v8.4" stroke="#d8c8b8" stroke-width=".7"/><rect x="516.4" y="257.6" width="65.60000000000002" height="69.39999999999998" fill="#f1f3fc"/><path d="M516.4 257.6L523.6 264.6V317.6L516.4 327z M582 257.6L574.4 264.6V317.6L582 327z" fill="#d9e0f7"/><rect x="516.4" y="257.6" width="65.60000000000002" height="69.39999999999998" fill="none" stroke="#5a76e0" stroke-width=".7"/><path d="M516.4 257.8H582" stroke="#66709c" stroke-width=".8"/><rect x="519.4" y="260.5" width="59.60000000000002" height="63.59999999999998" fill="none" stroke="#8ea8f0" stroke-width=".7"/><rect x="521.4" y="262.6" width="55.60000000000002" height="59.39999999999998" fill="none" stroke="#a0a4c0" stroke-width=".6"/><rect x="523.6" y="264.6" width="50.799999999999955" height="53.0" fill="#f7f7f7" stroke="#7f9cf0" stroke-width=".9"/><path d="M516.4 257.6L523.6 264.6M582 257.6L574.4 264.6M516.4 327L523.6 317.6M582 327L574.4 317.6" stroke="#4f74e4" stroke-width=".9"/><rect x="575.9" y="288" width="1.900" height="10.500" fill="#6a6e8c"/><rect x="638.8" y="257.6" width="65.80000000000007" height="69.39999999999998" fill="#f1f3fc"/><path d="M638.8 257.6L647 264.6V317.6L638.8 327z M704.6 257.6L697.6 264.6V317.6L704.6 327z" fill="#d9e0f7"/><rect x="638.8" y="257.6" width="65.80000000000007" height="69.39999999999998" fill="none" stroke="#5a76e0" stroke-width=".7"/><path d="M638.8 257.8H704.6" stroke="#66709c" stroke-width=".8"/><rect x="641.8" y="260.5" width="59.80000000000007" height="63.59999999999998" fill="none" stroke="#8ea8f0" stroke-width=".7"/><rect x="643.8" y="262.6" width="55.80000000000007" height="59.39999999999998" fill="none" stroke="#a0a4c0" stroke-width=".6"/><rect x="647" y="264.6" width="50.60000000000002" height="53.0" fill="#f7f7f7" stroke="#7f9cf0" stroke-width=".9"/><path d="M638.8 257.6L647 264.6M704.6 257.6L697.6 264.6M638.8 327L647 317.6M704.6 327L697.6 317.6" stroke="#4f74e4" stroke-width=".9"/><rect x="699.1" y="288" width="1.900" height="10.500" fill="#6a6e8c"/><g stroke="#ff1414" fill="#ff1414"><path d="M261.200 392.200V332" stroke-width="1.200" fill="none"/><path d="M261.200 392.200H320" stroke-width="1.200" fill="none"/><path d="M261.200 323.800l-3.800 10.400h7.600z" stroke="none"/><path d="M329.400 392.200l-11.400-3.900v7.800z" stroke="none"/><rect x="258.600" y="390" width="4.400" height="4.400" fill="none" stroke="#ff6060" stroke-width=".6"/></g><text x="255.400" y="325.200" font-family="Liberation Sans,sans-serif" font-weight="bold" font-size="16.200" fill="#ff1414" stroke="#ff1414" stroke-width=".5">Z</text><text x="329.200" y="398.400" font-family="Liberation Sans,sans-serif" font-weight="bold" font-size="15.200" fill="#ff1414" stroke="#ff1414" stroke-width=".5">X</text><g fill="none" stroke="#a6a6a6" stroke-width="1.200"><path d="M850 219.4H907.2V238"/><path d="M850 226.4H907"/><path d="M850 238H894.6"/></g><g fill="none" stroke="#222" stroke-width="1.4" stroke-dasharray="1 1.2"><path d="M893.6 226.5V257.5M907 227V252M910.5 224V260"/><path d="M893.6 327V392.5M907 331V392.5M910.5 327V392.5"/></g><g fill="none" stroke="#2ec882" stroke-width="1"><rect x="895" y="238" width="12" height="4.2"/><path d="M895 238l12 4.2M907 238l-12 4.2"/><path d="M895.2 238V257.5"/><rect x="895" y="253" width="12" height="4.5" fill="#2ec882" fill-opacity=".35"/><rect x="902" y="257.5" width="4.2" height="5.5"/><rect x="903.200" y="263" width="2.200" height="56" fill="#2ec882" fill-opacity=".55" stroke-width=".8"/><rect x="902.6" y="319" width="3.8" height="5"/><rect x="895" y="327" width="12" height="4.2" fill="#2ec882" fill-opacity=".35"/><path d="M895.4 327V392.5" stroke-width="1.4"/><path d="M906.6 374V383"/><rect x="895" y="383" width="12" height="4.6"/><rect x="895" y="387.6" width="12" height="4.8"/><path d="M895 383l12 4.6M907 383l-12 4.6M895 387.6l12 4.8M907 387.6l-12 4.8" stroke-width=".7"/></g><g fill="none" stroke="#222" stroke-width="1.2" stroke-dasharray="1.2 1.2"><path d="M261 598.6H837M264 612.2H834M261 615.6H837"/></g><path d="M264 600.2H834" stroke="#2ec882" stroke-width="1.6" fill="none"/><g fill="none" stroke="#2ec882" stroke-width=".9"><rect x="298" y="600.6" width="4.6" height="11.6"/><path d="M298 600.6l4.6 11.6M302.6 600.6l-4.6 11.6" stroke-width=".6"/></g><g fill="none" stroke="#2ec882" stroke-width=".9"><rect x="333.6" y="600.6" width="4.6" height="11.6"/><path d="M333.6 600.6l4.6 11.6M338.20000000000005 600.6l-4.6 11.6" stroke-width=".6"/></g><g fill="none" stroke="#2ec882" stroke-width=".9"><rect x="369.2" y="600.6" width="4.6" height="11.6"/><path d="M369.2 600.6l4.6 11.6M373.8 600.6l-4.6 11.6" stroke-width=".6"/></g><g fill="none" stroke="#2ec882" stroke-width=".9"><rect x="405" y="600.6" width="4.6" height="11.6"/><path d="M405 600.6l4.6 11.6M409.6 600.6l-4.6 11.6" stroke-width=".6"/></g><g fill="none" stroke="#2ec882" stroke-width=".9"><rect x="440.6" y="600.6" width="4.6" height="11.6"/><path d="M440.6 600.6l4.6 11.6M445.20000000000005 600.6l-4.6 11.6" stroke-width=".6"/></g><g fill="none" stroke="#2ec882" stroke-width=".9"><rect x="476.2" y="600.6" width="4.6" height="11.6"/><path d="M476.2 600.6l4.6 11.6M480.8 600.6l-4.6 11.6" stroke-width=".6"/></g><g fill="none" stroke="#2ec882" stroke-width=".9"><rect x="511.4" y="600.6" width="4.6" height="11.6"/><path d="M511.4 600.6l4.6 11.6M516.0 600.6l-4.6 11.6" stroke-width=".6"/></g><g fill="none" stroke="#2ec882" stroke-width=".9"><rect x="582.6" y="600.6" width="4.6" height="11.6"/><path d="M582.6 600.6l4.6 11.6M587.2 600.6l-4.6 11.6" stroke-width=".6"/></g><g fill="none" stroke="#2ec882" stroke-width=".9"><rect x="618" y="600.6" width="4.6" height="11.6"/><path d="M618 600.6l4.6 11.6M622.6 600.6l-4.6 11.6" stroke-width=".6"/></g><g fill="none" stroke="#2ec882" stroke-width=".9"><rect x="633.8" y="600.6" width="4.6" height="11.6"/><path d="M633.8 600.6l4.6 11.6M638.4 600.6l-4.6 11.6" stroke-width=".6"/></g><g fill="none" stroke="#2ec882" stroke-width=".9"><rect x="705" y="600.6" width="4.6" height="11.6"/><path d="M705 600.6l4.6 11.6M709.6 600.6l-4.6 11.6" stroke-width=".6"/></g><g fill="none" stroke="#2ec882" stroke-width=".9"><rect x="725" y="600.6" width="4.6" height="11.6"/><path d="M725 600.6l4.6 11.6M729.6 600.6l-4.6 11.6" stroke-width=".6"/></g><g fill="none" stroke="#2ec882" stroke-width=".9"><rect x="760.4" y="600.6" width="4.6" height="11.6"/><path d="M760.4 600.6l4.6 11.6M765.0 600.6l-4.6 11.6" stroke-width=".6"/></g><g fill="none" stroke="#2ec882" stroke-width=".9"><rect x="796" y="600.6" width="4.6" height="11.6"/><path d="M796 600.6l4.6 11.6M800.6 600.6l-4.6 11.6" stroke-width=".6"/></g><g fill="none" stroke="#2ec882" stroke-width=".9"><rect x="264.2" y="600.6" width="6.6" height="11.6"/><path d="M264.2 600.6l6.6 11.6M270.8 600.6l-6.6 11.6" stroke-width=".6"/></g><g fill="none" stroke="#2ec882" stroke-width=".9"><rect x="827.2" y="600.6" width="6.4" height="11.6"/><path d="M827.2 600.6l6.4 11.6M833.6 600.6l-6.4 11.6" stroke-width=".6"/></g><path d="M271 601.5h11v3h-9" stroke="#2ec882" stroke-width=".9" fill="none"/><path d="M816 601.5h11M818 604h8" stroke="#2ec882" stroke-width=".9" fill="none"/><g fill="none" stroke="#9a9a9a"><path d="M260.8 563V599" stroke-width=".8" stroke-dasharray="2 1"/><path d="M264.6 563V599" stroke-width=".8" stroke-dasharray="4 1 1 1" stroke="#666"/><path d="M277 563V598" stroke-width="2.2" stroke="#8a8a8a"/><path d="M264.6 575.2H276M264.6 577.8H276M264.6 595.6H276M264.6 597.6H276" stroke-width=".9" stroke="#888"/><path d="M276.4 604v11" stroke-width="1.2" stroke-dasharray="1 1.2" stroke="#777"/></g><g fill="none" stroke="#9a9a9a"><path d="M821.4 563V598" stroke-width="2" stroke="#8a8a8a" stroke-dasharray="1.5 .6"/><path d="M833.6 563V599" stroke-width=".8" stroke-dasharray="4 1 1 1" stroke="#888"/><path d="M837 563V615" stroke-width=".8" stroke="#aaa"/><path d="M821.4 604v11" stroke-width="1.2" stroke-dasharray="1 1.2" stroke="#777"/></g><g fill="none" stroke="#3a3ae0" stroke-width=".9"><rect x="515.6" y="599" width="67.0" height="12.6"/><path d="M518.6 611.6V615.6H579.6V611.6"/><path d="M517.6 609.6L577.1 592.8l2.6 2.2v14"/></g><path d="M516.6 609H581.6" stroke="#1f9a78" stroke-width="1.6"/><path d="M516.6 610.4H581.6" stroke="#3a3ae0" stroke-width=".7"/><g fill="none" stroke="#3a3ae0" stroke-width=".9"><rect x="638.2" y="599" width="67.39999999999998" height="12.6"/><path d="M641.2 611.6V615.6H702.6V611.6"/><path d="M640.2 609.6L700.1 592.8l2.6 2.2v14"/></g><path d="M639.2 609H704.6" stroke="#1f9a78" stroke-width="1.6"/><path d="M639.2 610.4H704.6" stroke="#3a3ae0" stroke-width=".7"/></svg><div class="pnl" style="left:961px;top:60px;width:311px;height:586px"></div>
<div class="combo" style="left:966.6px;top:74.4px;width:216px;height:11.4px"></div>
<div class="t" style="left:970.5px;top:75.0px;color:#dcdcdc">(Alles EIN)</div>
<div class="a" style="left:1171px;top:75.5px;width:1px;height:9px;background:#8a8a8a"></div>
<svg style="left:1173.5px;top:76.5px" width="7" height="7" viewBox="0 0 8 8"><path d="M2.5 0h3v3.2h2.5l-4 4.3-4-4.3h2.5z" fill="#3b68bc"/></svg>
<svg style="left:1188px;top:75.5px" width="8.6" height="8.6" viewBox="0 0 9 9"><rect width="9" height="9" fill="#3d8fd6"/><rect x="2" y="0" width="5" height="3.2" fill="#d5e8f8"/><rect x="1.5" y="5" width="4" height="4" fill="#bcd9f2"/><rect x="6" y="6" width="2" height="3" fill="#e8d48a"/></svg>
<svg style="left:1200.2px;top:75.5px" width="9" height="9" viewBox="0 0 9 9"><path d="M0 1h5M2.5 1v6.5M2.5 4.5h2M2.5 7.5h2" stroke="#3d8fd6" stroke-width="1.2" fill="none"/><path d="M5 4.5h4M5 7.5h4" stroke="#e8c860" stroke-width="1.4"/></svg>
<svg style="left:1213px;top:75.5px" width="8.6" height="9.5" viewBox="0 0 9 10"><rect x="2" y="0" width="7" height="7" fill="#8a9098"/><rect x="3.5" y="0" width="4" height="2.5" fill="#c8ccd0"/><rect x="0" y="5" width="5" height="4.5" fill="#9aa0a8" stroke="#555" stroke-width=".5"/></svg>
<svg style="left:1227.6px;top:77px" width="9" height="7" viewBox="0 0 9 7"><path d="M0 3.200h2.500" stroke="#8cc4f0" stroke-width="1"/><path d="M2.300 .400l2.500 2.800-2.500 2.800zM7.300 .600l-2.500 2.600 2.500 2.600z" fill="#8cc4f0"/></svg>
<svg style="left:1241px;top:75.500px" width="9" height="9" viewBox="0 0 9 9"><rect x="0" y="0" width="4.800" height="8.400" fill="#e4eefa"/><rect x="0" y="0" width="1.700" height="8.400" fill="#2f7fd0"/><path d="M7.500 1.600l-2.600 2.600 2.600 2.600z" fill="#8cc4f0"/><path d="M7.700 1.400v5.600" stroke="#8cc4f0" stroke-width=".8"/></svg>
<svg style="left:1252.3px;top:76px" width="9.4" height="8.4" viewBox="0 0 10 9"><path d="M0 .7h10" stroke="#9cc8ee" stroke-width="1.4"/><path d="M5 2.5l3 3.5h-6z" fill="#3d8fd6"/><path d="M0 7.8h10" stroke="#3d8fd6" stroke-width="1.6"/></svg>
<div class="hd" style="top:94px;height:11.8px"></div>
<svg style="left:969px;top:96px" width="10" height="7.600" viewBox="0 0 10 7.600"><path d="M0 7.400V.2h3.400l.9 1.100h3.700v1.500h-6z" fill="#eef5ff"/><path d="M.3 7.400l1.900-4.400h7.600l-2 4.400z" fill="#8fb8e8"/><path d="M.3 7.400l1.900-4.400h3l-1.500 4.400z" fill="#c4dcf6"/></svg>
<svg style="left:982.800px;top:95.2px" width="9" height="9" viewBox="0 0 9 9"><rect x=".5" y=".5" width="8" height="8" fill="#4a6682" stroke="#9ca6b2" stroke-width=".8"/><rect x="2.600" y="2.600" width="3.800" height="3.800" fill="#c6ced6"/></svg>
<div class="t" style="left:999px;top:94.7px;color:#c2ccd6;letter-spacing:-.05px">Wandkonstruktion</div>
<div class="hd" style="top:406.4px;height:11.6px"></div>
<svg style="left:969px;top:408.4px" width="10" height="7.600" viewBox="0 0 10 7.600"><path d="M0 7.400V.2h3.400l.9 1.100h3.700v1.500h-6z" fill="#eef5ff"/><path d="M.3 7.400l1.900-4.400h7.600l-2 4.400z" fill="#8fb8e8"/><path d="M.3 7.400l1.900-4.400h3l-1.500 4.400z" fill="#c4dcf6"/></svg>
<svg style="left:982.800px;top:407.59999999999997px" width="9" height="9" viewBox="0 0 9 9"><rect x=".5" y=".5" width="8" height="8" fill="#4a6682" stroke="#9ca6b2" stroke-width=".8"/><rect x="2.600" y="2.600" width="3.800" height="3.800" fill="#c6ced6"/></svg>
<div class="t" style="left:999px;top:407.09999999999997px;color:#c2ccd6;letter-spacing:-.05px">Stockwerkliste, Grundrissinformationen</div>
<div class="hd" style="top:517px;height:11.4px"></div>
<svg style="left:969px;top:519px" width="10" height="7.600" viewBox="0 0 10 7.600"><path d="M0 7.400V.2h3.400l.9 1.100h3.700v1.500h-6z" fill="#eef5ff"/><path d="M.3 7.400l1.900-4.400h7.600l-2 4.400z" fill="#8fb8e8"/><path d="M.3 7.400l1.900-4.400h3l-1.500 4.400z" fill="#c4dcf6"/></svg>
<svg style="left:982.800px;top:518.2px" width="9" height="9" viewBox="0 0 9 9"><rect x=".5" y=".5" width="8" height="8" fill="none" stroke="#9ca6b2" stroke-width=".8"/><path d="M2 4.800l1.800 1.800 3.200-4.200" stroke="#b4c0cc" stroke-width=".9" fill="none"/></svg>
<div class="t" style="left:999px;top:517.6999999999999px;color:#c2ccd6;letter-spacing:-.05px">Bauteile</div>
<div class="cb" style="left:968.6px;top:111.6px;width:8.4px;height:8.4px;background:#3a3a3a;border-color:#666"></div>
<div class="a" style="left:970.8px;top:113.8px;width:4px;height:4px;background:#f0f0f0"></div>
<div class="t" style="left:980.5px;top:110.39999999999999px;">Gruppen</div>
<div class="cb" style="left:1041px;top:111px;width:8.6px;height:8.6px;"></div>
<div class="t" style="left:1054px;top:110.39999999999999px;">Lagenkonturen</div>
<div class="lb" style="left:982.6px;top:122.6px;width:36.4px;height:68.6px"></div>
<div class="lb" style="left:1055px;top:122.6px;width:17.8px;height:68.6px"></div>
<div class="t" style="left:987px;top:123.2px;color:#dadada">7</div>
<div class="cb" style="left:968.6px;top:124.0px;width:8.4px;height:8.4px;"></div>
<div class="cb" style="left:1041px;top:123.8px;width:8.6px;height:8.6px;"></div>
<div class="t" style="left:1059px;top:122.99999999999999px;color:#dadada">7</div>
<div class="t" style="left:987px;top:133.00000000000003px;color:#dadada">6</div>
<div class="cb" style="left:968.6px;top:133.8px;width:8.4px;height:8.4px;"></div>
<div class="cb" style="left:1041px;top:133.6px;width:8.6px;height:8.6px;"></div>
<div class="t" style="left:1059px;top:132.8px;color:#dadada">6</div>
<div class="t" style="left:987px;top:142.8px;color:#dadada">5</div>
<div class="cb" style="left:968.6px;top:143.6px;width:8.4px;height:8.4px;"></div>
<div class="cb" style="left:1041px;top:143.39999999999998px;width:8.6px;height:8.6px;"></div>
<div class="t" style="left:1059px;top:142.6px;color:#dadada">5</div>
<div class="t" style="left:987px;top:153.00000000000003px;color:#dadada">4</div>
<div class="cb" style="left:968.6px;top:153.8px;width:8.4px;height:8.4px;"></div>
<div class="cb" style="left:1041px;top:153.6px;width:8.6px;height:8.6px;"></div>
<div class="t" style="left:1059px;top:152.8px;color:#dadada">4</div>
<div class="t" style="left:987px;top:162.60000000000002px;color:#dadada">3</div>
<div class="cb" style="left:968.6px;top:163.4px;width:8.4px;height:8.4px;"></div>
<div class="cb" style="left:1041px;top:163.2px;width:8.6px;height:8.6px;"></div>
<div class="t" style="left:1059px;top:162.4px;color:#dadada">3</div>
<div class="a" style="left:983.4px;top:172.4px;width:34.8px;height:9.2px;background:#20407c"></div>
<div class="t" style="left:987px;top:171.8px;color:#dadada">2</div>
<div class="cb" style="left:968.6px;top:172.6px;width:8.4px;height:8.4px;background:#20407c;"></div>
<svg style="left:968.3000000000001px;top:171.39999999999998px" width="9" height="9" viewBox="0 0 9 9"><path d="M2.200 4.600l1.700 1.800 3-3.900" stroke="#f0f0f0" stroke-width="1.350" fill="none"/></svg>
<div class="cb" style="left:1041px;top:172.39999999999998px;width:8.6px;height:8.6px;"></div>
<div class="t" style="left:1059px;top:171.6px;color:#dadada">2</div>
<div class="t" style="left:987px;top:182.00000000000003px;color:#dadada">1</div>
<div class="cb" style="left:968.6px;top:182.8px;width:8.4px;height:8.4px;"></div>
<div class="cb" style="left:1041px;top:182.6px;width:8.6px;height:8.6px;"></div>
<div class="t" style="left:1059px;top:181.8px;color:#dadada">1</div>
<div class="a" style="left:1021px;top:123px;width:14.8px;height:68px;background:#4e5050;border:1px solid #5c5e5e;box-sizing:border-box"></div>
<div class="a" style="left:1022px;top:124px;width:12.8px;height:13px;background:#444646"></div>
<div class="a" style="left:1022px;top:177px;width:12.8px;height:13px;background:#444646"></div>
<svg style="left:1024.4px;top:128px" width="8" height="5" viewBox="0 0 8 5"><path d="M4 0l4 5h-8z" fill="#333"/></svg>
<svg style="left:1024.4px;top:181px" width="8" height="5" viewBox="0 0 8 5"><path d="M4 5l4-5h-8z" fill="#333"/></svg>
<div class="a" style="left:1022.5px;top:162px;width:11.8px;height:14px;background:#2c2c2c"></div>
<div class="a" style="left:1075.4px;top:122.6px;width:50.2px;height:68.6px;border:1px solid #5e6060;box-sizing:border-box"></div>
<div class="t" style="left:1079.4px;top:133.0px;color:#dadada">0.0125</div>
<div class="t" style="left:1079.4px;top:171.8px;color:#dadada">0.015</div>
<div class="t" style="left:1079.4px;top:181.4px;color:#dadada">0.000</div>
<div class="cb" style="left:968.6px;top:195.8px;width:8.4px;height:8.4px;"></div>
<svg style="left:968.3000000000001px;top:194.6px" width="9" height="9" viewBox="0 0 9 9"><path d="M2.200 4.600l1.700 1.800 3-3.900" stroke="#f0f0f0" stroke-width="1.350" fill="none"/></svg>
<div class="lb" style="left:982.6px;top:195px;width:50.2px;height:10.2px"></div>
<div class="t" style="left:987px;top:195.4px;color:#dadada">0</div>
<div class="cb" style="left:1041px;top:195.6px;width:8.6px;height:8.6px;"></div>
<div class="lb" style="left:1055px;top:194px;width:17.8px;height:10.6px"></div>
<div class="t" style="left:1059px;top:194.8px;color:#dadada">0</div>
<div class="a" style="left:1075.4px;top:195px;width:50.2px;height:10.2px;border:1px solid #5e6060;box-sizing:border-box"></div>
<div class="t" style="left:1079.4px;top:195.4px;color:#dadada">0.200</div>
<div class="lb" style="left:982.6px;top:207px;width:36.4px;height:69.4px"></div>
<div class="lb" style="left:1055px;top:207.200px;width:17.8px;height:68.600px"></div>
<div class="t" style="left:987px;top:208.60000000000002px;color:#dadada">-1</div>
<div class="cb" style="left:968.6px;top:208.0px;width:8.4px;height:8.4px;"></div>
<div class="cb" style="left:1041px;top:207.20000000000002px;width:8.6px;height:8.6px;"></div>
<div class="t" style="left:1059px;top:207.60000000000002px;color:#dadada">-1</div>
<div class="t" style="left:987px;top:218.4px;color:#dadada">-2</div>
<div class="cb" style="left:968.6px;top:217.79999999999998px;width:8.4px;height:8.4px;"></div>
<div class="cb" style="left:1041px;top:217.0px;width:8.6px;height:8.6px;"></div>
<div class="t" style="left:1059px;top:217.4px;color:#dadada">-2</div>
<div class="a" style="left:983.4px;top:228px;width:34.8px;height:9.2px;background:#20407c"></div>
<div class="t" style="left:987px;top:228.20000000000002px;color:#dadada">-3</div>
<div class="cb" style="left:968.6px;top:227.6px;width:8.4px;height:8.4px;background:#20407c;border-color:#20407c;"></div>
<div class="cb" style="left:1041px;top:226.8px;width:8.6px;height:8.6px;"></div>
<div class="t" style="left:1059px;top:227.20000000000002px;color:#dadada">-3</div>
<div class="t" style="left:987px;top:237.8px;color:#dadada">-4</div>
<div class="cb" style="left:968.6px;top:237.2px;width:8.4px;height:8.4px;"></div>
<div class="cb" style="left:1041px;top:236.4px;width:8.6px;height:8.6px;"></div>
<div class="t" style="left:1059px;top:236.8px;color:#dadada">-4</div>
<div class="t" style="left:987px;top:247.4px;color:#dadada">-5</div>
<div class="cb" style="left:968.6px;top:247.79999999999998px;width:8.4px;height:8.4px;"></div>
<div class="cb" style="left:1041px;top:246.0px;width:8.6px;height:8.6px;"></div>
<div class="t" style="left:1059px;top:246.4px;color:#dadada">-5</div>
<div class="t" style="left:987px;top:257.0px;color:#dadada">-6</div>
<div class="cb" style="left:968.6px;top:257.40000000000003px;width:8.4px;height:8.4px;"></div>
<div class="cb" style="left:1041px;top:255.60000000000002px;width:8.6px;height:8.6px;"></div>
<div class="t" style="left:1059px;top:256.0px;color:#dadada">-6</div>
<div class="t" style="left:987px;top:267.2px;color:#dadada">-7</div>
<div class="cb" style="left:968.6px;top:267.6px;width:8.4px;height:8.4px;"></div>
<div class="cb" style="left:1041px;top:265.8px;width:8.6px;height:8.6px;"></div>
<div class="t" style="left:1059px;top:266.2px;color:#dadada">-7</div>
<div class="a" style="left:1021px;top:208px;width:14.8px;height:68px;background:#4e5050;border:1px solid #5c5e5e;box-sizing:border-box"></div>
<div class="a" style="left:1022px;top:209px;width:12.8px;height:13px;background:#444646"></div>
<div class="a" style="left:1022px;top:262px;width:12.8px;height:13px;background:#444646"></div>
<svg style="left:1024.4px;top:213px" width="8" height="5" viewBox="0 0 8 5"><path d="M4 0l4 5h-8z" fill="#333"/></svg>
<svg style="left:1024.4px;top:266px" width="8" height="5" viewBox="0 0 8 5"><path d="M4 5l4-5h-8z" fill="#333"/></svg>
<div class="a" style="left:1022.5px;top:223px;width:11.8px;height:13px;background:#2c2c2c"></div>
<div class="a" style="left:1021.5px;top:276.6px;width:13px;height:2.4px;background:#4e5050"></div>
<div class="a" style="left:1021.5px;top:191.2px;width:11.5px;height:2.2px;background:#2c2c2c"></div>
<div class="a" style="left:1075.4px;top:207px;width:50.2px;height:68.600px;border:1px solid #5e6060;box-sizing:border-box"></div>
<div class="t" style="left:1079.4px;top:227.0px;color:#dadada">0.060</div>
<div class="t" style="left:1079.4px;top:265.6px;color:#dadada">0.010</div>
<div class="cb" style="left:968px;top:282.9px;width:10.4px;height:10px;"></div>
<svg style="left:968.7px;top:282.5px" width="9" height="9" viewBox="0 0 9 9"><path d="M2.200 4.600l1.700 1.800 3-3.900" stroke="#f0f0f0" stroke-width="1.350" fill="none"/></svg>
<div class="t" style="left:982.6px;top:283.09999999999997px;color:#dcdcdc;word-spacing:0px">Stäbe füllen</div>
<div class="cb" style="left:968px;top:296.0px;width:10.4px;height:10px;"></div>
<svg style="left:968.7px;top:295.6px" width="9" height="9" viewBox="0 0 9 9"><path d="M2.200 4.600l1.700 1.800 3-3.900" stroke="#f0f0f0" stroke-width="1.350" fill="none"/></svg>
<div class="t" style="left:982.6px;top:295.3px;color:#dcdcdc;word-spacing:0px">Platten füllen</div>
<div class="sep" style="left:968px;top:310px;width:282px"></div>
<div class="cb" style="left:968px;top:313.0px;width:10.4px;height:10px;"></div>
<div class="t" style="left:982.6px;top:312.8px;color:#dcdcdc;word-spacing:0px">Wandkörper</div>
<div class="cb" style="left:968px;top:326.4px;width:10.4px;height:10px;"></div>
<div class="t" style="left:982.6px;top:326.2px;color:#dcdcdc;word-spacing:0px">Elemente</div>
<div class="cb" style="left:968px;top:339.4px;width:10.4px;height:10px;"></div>
<div class="t" style="left:982.6px;top:339.2px;color:#dcdcdc;word-spacing:0px">Aufmaßelemente</div>
<div class="sep" style="left:968px;top:356px;width:282px"></div>
<div class="cb" style="left:968px;top:359.79999999999995px;width:10.4px;height:10px;"></div>
<div class="t" style="left:982.6px;top:359.59999999999997px;color:#dcdcdc;word-spacing:0.5px">Linien, Kreise, Schraffuren, ..</div>
<div class="cb" style="left:968px;top:373.0px;width:10.4px;height:10px;"></div>
<div class="t" style="left:982.6px;top:372.8px;color:#dcdcdc;word-spacing:0.5px">Bemaßung, Texte, ..</div>
<div class="cb" style="left:968px;top:386.0px;width:10.4px;height:10px;"></div>
<div class="t" style="left:982.6px;top:385.8px;color:#dcdcdc;word-spacing:0px">Bilder</div>
<div class="a" style="left:996px;top:423px;width:230px;height:89.4px;border:1px solid #5a5c5c;box-sizing:border-box"></div>
<div class="a" style="left:997px;top:423.6px;width:228px;height:10.2px;background:#505252"></div>
<div class="a" style="left:997px;top:434px;width:228px;height:10.8px;background:#20407c"></div>
<div class="a" style="left:997px;top:445.2px;width:228px;height:10.8px;background:#505252"></div>
<div class="t" style="left:1000px;top:423.40000000000003px;color:#dadada">UG</div>
<div class="t" style="left:1032.6px;top:423.40000000000003px;color:#e4e4e4;word-spacing:.75px">-1.000  -  0.000</div>
<div class="t" style="left:1000px;top:434.40000000000003px;color:#f0f0f0">EG</div>
<div class="t" style="left:1031px;top:434.40000000000003px;color:#f0f0f0;word-spacing:.75px">0.000  -  2.925</div>
<div class="t" style="left:1000px;top:445.6px;color:#dadada">DG</div>
<div class="t" style="left:1032.6px;top:445.6px;color:#e4e4e4;word-spacing:.75px">2.925  -  2.925</div>
<div class="cb" style="left:982px;top:423px;width:10.6px;height:9.8px;"></div>
<div class="cb" style="left:982px;top:434.6px;width:10.6px;height:9.6px;background:#20407c;border-color:#4a5a7a;"></div>
<svg style="left:982.8px;top:434.00000000000006px" width="9" height="9" viewBox="0 0 9 9"><path d="M2.200 4.600l1.700 1.800 3-3.900" stroke="#f0f0f0" stroke-width="1.350" fill="none"/></svg>
<div class="cb" style="left:982px;top:445.8px;width:10.6px;height:9.6px;"></div>
<svg style="left:982.8px;top:445.20000000000005px" width="9" height="9" viewBox="0 0 9 9"><path d="M2.200 4.600l1.700 1.800 3-3.900" stroke="#f0f0f0" stroke-width="1.350" fill="none"/></svg>
<div class="cbd" style="left:982px;top:457.4px;width:10.6px;height:9.4px;"></div>
<div class="cbd" style="left:982px;top:468.6px;width:10.6px;height:9.4px;"></div>
<div class="cbd" style="left:982px;top:480px;width:10.6px;height:9.4px;"></div>
<div class="cbd" style="left:982px;top:492px;width:10.6px;height:9.4px;"></div>
<div class="cbd" style="left:982px;top:503.4px;width:10.6px;height:9.4px;"></div>
<div class="a" style="left:1229px;top:423px;width:14px;height:89px;background:#4e5050;border:1px solid #5c5e5e;box-sizing:border-box"></div>
<div class="a" style="left:1230px;top:424px;width:12px;height:13px;background:#4e5050"></div>
<div class="a" style="left:1230px;top:498px;width:12px;height:13px;background:#4e5050"></div>
<svg style="left:1232.0px;top:428px" width="8" height="5" viewBox="0 0 8 5"><path d="M4 0l4 5h-8z" fill="#333"/></svg>
<svg style="left:1232.0px;top:502px" width="8" height="5" viewBox="0 0 8 5"><path d="M4 5l4-5h-8z" fill="#333"/></svg>
<div class="a" style="left:1230.5px;top:436.5px;width:11px;height:62px;background:#2c2c2c"></div>
<div class="a" style="left:1229.4px;top:436.5px;width:13.2px;height:62px;background:#4e5050"></div>
<div class="a" style="left:1229.5px;top:512.4px;width:13.5px;height:2.6px;background:#4e5050"></div>
<div class="a" style="left:1253px;top:104px;width:14.6px;height:239px;background:#2e2e2e"></div>
<div class="a" style="left:1253px;top:343px;width:14.6px;height:280px;background:#4e5050"></div>
<svg style="left:1255.2px;top:94.6px" width="10.4" height="6.6" viewBox="0 0 10 6"><path d="M5 0l5 6h-10z" fill="#2a2a2a"/></svg>
<svg style="left:1255.2px;top:627.5px" width="10.4" height="6.6" viewBox="0 0 10 6"><path d="M5 6l5-6h-10z" fill="#2a2a2a"/></svg>
<div class="a" style="left:961px;top:530px;width:292px;height:107px;overflow:hidden">
<div class="t" style="left:10.399999999999977px;top:5.7999999999999545px;color:#cfcfcf">S</div>
<div class="t" style="left:23.600000000000023px;top:5.7999999999999545px;color:#cfcfcf">W</div>
<div class="t" style="left:37.60000000000002px;top:5.7999999999999545px;color:#cfcfcf">D</div>
<div class="t" style="left:53.200000000000045px;top:5.7999999999999545px;color:#cfcfcf">D</div>
<div class="t" style="left:67.59999999999991px;top:5.7999999999999545px;color:#cfcfcf">S</div>
<div class="t" style="left:83.40000000000009px;top:5.7999999999999545px;color:#cfcfcf">F</div>
<div class="a" style="left:19.600000000000023px;top:6px;width:1px;height:110px;background:#5c5c5c"></div>
<div class="a" style="left:48.60000000000002px;top:6px;width:1px;height:110px;background:#5c5c5c"></div>
<div class="a" style="left:64.40000000000009px;top:6px;width:1px;height:110px;background:#5c5c5c"></div>
<div class="sep" style="left:7px;top:19.600000000000023px;width:284px"></div>
<div class="cb" style="left:51.39999999999998px;top:23.600000000000023px;width:10.6px;height:9.2px"></div>
<svg style="left:52.199999999999974px;top:22.800000000000022px" width="9" height="9" viewBox="0 0 9 9"><path d="M2.200 4.600l1.700 1.800 3-3.900" stroke="#f0f0f0" stroke-width="1.350" fill="none"/></svg>
<div class="t" style="left:95.59999999999991px;top:23.399999999999977px;color:#dcdcdc;word-spacing:0px">Sparren</div>
<div class="cb" style="left:51.39999999999998px;top:36px;width:10.6px;height:9.2px"></div>
<svg style="left:52.199999999999974px;top:35.2px" width="9" height="9" viewBox="0 0 9 9"><path d="M2.200 4.600l1.700 1.800 3-3.900" stroke="#f0f0f0" stroke-width="1.350" fill="none"/></svg>
<div class="t" style="left:95.59999999999991px;top:36.19999999999993px;color:#dcdcdc;word-spacing:0px">Pfetten</div>
<div class="cb" style="left:51.39999999999998px;top:50px;width:10.6px;height:9.2px"></div>
<svg style="left:52.199999999999974px;top:49.2px" width="9" height="9" viewBox="0 0 9 9"><path d="M2.200 4.600l1.700 1.800 3-3.900" stroke="#f0f0f0" stroke-width="1.350" fill="none"/></svg>
<div class="t" style="left:95.59999999999991px;top:50.39999999999998px;color:#dcdcdc;word-spacing:0.65px">Grat- / Kehlsparren</div>
<div class="cb" style="left:51.39999999999998px;top:63.39999999999998px;width:10.6px;height:9.2px"></div>
<svg style="left:52.199999999999974px;top:62.59999999999998px" width="9" height="9" viewBox="0 0 9 9"><path d="M2.200 4.600l1.700 1.800 3-3.900" stroke="#f0f0f0" stroke-width="1.350" fill="none"/></svg>
<div class="t" style="left:95.59999999999991px;top:64.0px;color:#dcdcdc;word-spacing:0px">Zangen</div>
<div class="cb" style="left:7px;top:78px;width:10.6px;height:9.2px"></div>
<svg style="left:7.8px;top:77.2px" width="9" height="9" viewBox="0 0 9 9"><path d="M2.200 4.600l1.700 1.800 3-3.900" stroke="#f0f0f0" stroke-width="1.350" fill="none"/></svg>
<div class="cb" style="left:21.399999999999977px;top:78px;width:10.6px;height:9.2px"></div>
<svg style="left:22.199999999999978px;top:77.2px" width="9" height="9" viewBox="0 0 9 9"><path d="M2.200 4.600l1.700 1.800 3-3.900" stroke="#f0f0f0" stroke-width="1.350" fill="none"/></svg>
<div class="cb" style="left:35.60000000000002px;top:78px;width:10.6px;height:9.2px"></div>
<svg style="left:36.40000000000002px;top:77.2px" width="9" height="9" viewBox="0 0 9 9"><path d="M2.200 4.600l1.700 1.800 3-3.900" stroke="#f0f0f0" stroke-width="1.350" fill="none"/></svg>
<div class="cb" style="left:51.39999999999998px;top:78px;width:10.6px;height:9.2px"></div>
<svg style="left:52.199999999999974px;top:77.2px" width="9" height="9" viewBox="0 0 9 9"><path d="M2.200 4.600l1.700 1.800 3-3.900" stroke="#f0f0f0" stroke-width="1.350" fill="none"/></svg>
<div class="cb" style="left:67px;top:78px;width:10.6px;height:9.2px"></div>
<svg style="left:67.8px;top:77.2px" width="9" height="9" viewBox="0 0 9 9"><path d="M2.200 4.600l1.700 1.800 3-3.900" stroke="#f0f0f0" stroke-width="1.350" fill="none"/></svg>
<div class="cb" style="left:80px;top:78px;width:10.6px;height:9.2px"></div>
<svg style="left:80.8px;top:77.2px" width="9" height="9" viewBox="0 0 9 9"><path d="M2.200 4.600l1.700 1.800 3-3.900" stroke="#f0f0f0" stroke-width="1.350" fill="none"/></svg>
<div class="t" style="left:95.59999999999991px;top:78.19999999999993px;color:#dcdcdc;word-spacing:0.65px">Stäbe / Profilstäbe</div>
<div class="cb" style="left:7px;top:91px;width:10.6px;height:9.2px"></div>
<svg style="left:7.8px;top:90.2px" width="9" height="9" viewBox="0 0 9 9"><path d="M2.200 4.600l1.700 1.800 3-3.900" stroke="#f0f0f0" stroke-width="1.350" fill="none"/></svg>
<div class="cb" style="left:21.399999999999977px;top:91px;width:10.6px;height:9.2px"></div>
<svg style="left:22.199999999999978px;top:90.2px" width="9" height="9" viewBox="0 0 9 9"><path d="M2.200 4.600l1.700 1.800 3-3.900" stroke="#f0f0f0" stroke-width="1.350" fill="none"/></svg>
<div class="cb" style="left:35.60000000000002px;top:91px;width:10.6px;height:9.2px"></div>
<svg style="left:36.40000000000002px;top:90.2px" width="9" height="9" viewBox="0 0 9 9"><path d="M2.200 4.600l1.700 1.800 3-3.900" stroke="#f0f0f0" stroke-width="1.350" fill="none"/></svg>
<div class="cb" style="left:51.39999999999998px;top:91px;width:10.6px;height:9.2px"></div>
<svg style="left:52.199999999999974px;top:90.2px" width="9" height="9" viewBox="0 0 9 9"><path d="M2.200 4.600l1.700 1.800 3-3.900" stroke="#f0f0f0" stroke-width="1.350" fill="none"/></svg>
<div class="cb" style="left:67px;top:91px;width:10.6px;height:9.2px"></div>
<svg style="left:67.8px;top:90.2px" width="9" height="9" viewBox="0 0 9 9"><path d="M2.200 4.600l1.700 1.800 3-3.900" stroke="#f0f0f0" stroke-width="1.350" fill="none"/></svg>
<div class="cb" style="left:80px;top:91px;width:10.6px;height:9.2px"></div>
<svg style="left:80.8px;top:90.2px" width="9" height="9" viewBox="0 0 9 9"><path d="M2.200 4.600l1.700 1.800 3-3.900" stroke="#f0f0f0" stroke-width="1.350" fill="none"/></svg>
<div class="t" style="left:95.59999999999991px;top:91.0px;color:#dcdcdc;word-spacing:0px">Platten</div>
<div class="cb" style="left:7px;top:104.39999999999998px;width:10.6px;height:9.2px"></div>
<svg style="left:7.8px;top:103.59999999999998px" width="9" height="9" viewBox="0 0 9 9"><path d="M2.200 4.600l1.700 1.800 3-3.900" stroke="#f0f0f0" stroke-width="1.350" fill="none"/></svg>
<div class="cb" style="left:21.399999999999977px;top:104.39999999999998px;width:10.6px;height:9.2px"></div>
<svg style="left:22.199999999999978px;top:103.59999999999998px" width="9" height="9" viewBox="0 0 9 9"><path d="M2.200 4.600l1.700 1.800 3-3.900" stroke="#f0f0f0" stroke-width="1.350" fill="none"/></svg>
<div class="cb" style="left:35.60000000000002px;top:104.39999999999998px;width:10.6px;height:9.2px"></div>
<svg style="left:36.40000000000002px;top:103.59999999999998px" width="9" height="9" viewBox="0 0 9 9"><path d="M2.200 4.600l1.700 1.800 3-3.900" stroke="#f0f0f0" stroke-width="1.350" fill="none"/></svg>
<div class="cb" style="left:51.39999999999998px;top:104.39999999999998px;width:10.6px;height:9.2px"></div>
<svg style="left:52.199999999999974px;top:103.59999999999998px" width="9" height="9" viewBox="0 0 9 9"><path d="M2.200 4.600l1.700 1.800 3-3.900" stroke="#f0f0f0" stroke-width="1.350" fill="none"/></svg>
<div class="cb" style="left:67px;top:104.39999999999998px;width:10.6px;height:9.2px"></div>
<svg style="left:67.8px;top:103.59999999999998px" width="9" height="9" viewBox="0 0 9 9"><path d="M2.200 4.600l1.700 1.800 3-3.900" stroke="#f0f0f0" stroke-width="1.350" fill="none"/></svg>
<div class="cb" style="left:80px;top:104.39999999999998px;width:10.6px;height:9.2px"></div>
<svg style="left:80.8px;top:103.59999999999998px" width="9" height="9" viewBox="0 0 9 9"><path d="M2.200 4.600l1.700 1.800 3-3.900" stroke="#f0f0f0" stroke-width="1.350" fill="none"/></svg>
<div class="t" style="left:95.59999999999991px;top:103.59999999999991px;color:#dcdcdc;word-spacing:0px">Verbindungsmittel</div>
</div>
<div class="a" style="left:1277.4px;top:59px;width:22.6px;height:587px;background:#3a3a3a;border-radius:5px 0 0 5px"></div>
<div class="a" style="left:1281.6px;top:62px;width:15px;height:94px;background:#2e2e2e;border-radius:4px"></div>
<div class="t" style="left:1245.3px;top:107px;width:90px;text-align:center;transform:rotate(-90deg);color:#868686;font-size:6.7px">Arbeitsebenen, Clipbox</div>
<div class="a" style="left:0;top:652px;width:1300px;height:23px;background:#4e5050"></div>
<div class="a" style="left:0;top:675px;width:1300px;height:16px;background:#3c3c3c"></div>
<div class="a" style="left:0;top:674.6px;width:1300px;height:1px;background:#444"></div>
<div class="a" style="left:1029px;top:652px;width:1px;height:23px;background:#5c5e5e"></div>
<div class="a" style="left:1030px;top:652px;width:270px;height:23px;background:linear-gradient(90deg,#4e5050 0,#4b5560 2%,#495c70 5%,#446488 9%,#406ea4 12%,#3a7cbc 16%,#318bd6 20%,#318bd6 80%,#3a7cbc 84%,#406ea4 88%,#446488 91%,#495c70 95%,#4b5560 98%,#4e5050 100%)"></div>
<svg style="left:1120px;top:650px" width="32" height="26" viewBox="1120 650 32 26"><path d="M1138.200 655.200a6.900 6.900 0 1 0-9 11.400l-1.800 5.400 6-2.600" fill="none" stroke="#fff" stroke-width="1.500" stroke-linejoin="round"/><circle cx="1140.400" cy="663.600" r="7.300" fill="#fff"/><path d="M1143.500 668.500l3 4-6.500-2.200z" fill="#fff"/><circle cx="1140.400" cy="663.600" r="4.400" fill="#2f7fc8"/></svg>
<div class="t" style="left:1137.500px;top:658px;font-family:'Liberation Sans',sans-serif;font-weight:bold;font-size:8.200px;color:#fff;line-height:9px;height:9px">D</div>
<div class="t" style="left:1159.300px;top:652.900px;font-family:'Liberation Sans',sans-serif;font-size:13.800px;color:#fff;line-height:18px;height:18px;letter-spacing:0.250px;-webkit-text-stroke:0">D-Bot</div>
<div class="a" style="left:0px;top:677px;width:934px;height:14px;border:1px solid #4c4c4c;border-bottom:none;box-sizing:border-box;background:#3a3a3a"></div>
<div class="a" style="left:936px;top:677px;width:52px;height:14px;border:1px solid #4c4c4c;border-bottom:none;box-sizing:border-box;background:#3a3a3a"></div>
<div class="t" style="left:936px;top:676px;width:52px;font-family:'Liberation Sans',sans-serif;font-size:8.2px;color:#d0d0d0;text-align:center;line-height:13px;height:13px">428.868 K</div>
<div class="a" style="left:990px;top:677px;width:52px;height:14px;border:1px solid #4c4c4c;border-bottom:none;box-sizing:border-box;background:#3a3a3a"></div>
<div class="t" style="left:990px;top:676px;width:52px;font-family:'Liberation Sans',sans-serif;font-size:8.2px;color:#d0d0d0;text-align:center;line-height:13px;height:13px">Direct2D</div>
<div class="a" style="left:1045px;top:677px;width:10px;height:14px;border:1px solid #4c4c4c;border-bottom:none;box-sizing:border-box;background:#3a3a3a"></div>
<div class="a" style="left:1058px;top:677px;width:18px;height:14px;border:1px solid #4c4c4c;border-bottom:none;box-sizing:border-box;background:#3a3a3a"></div>
<div class="t" style="left:1058px;top:676px;width:18px;font-family:'Liberation Sans',sans-serif;font-size:8.2px;color:#d0d0d0;text-align:center;line-height:13px;height:13px">m</div>
<div class="a" style="left:1078px;top:677px;width:126px;height:14px;border:1px solid #4c4c4c;border-bottom:none;box-sizing:border-box;background:#3a3a3a"></div>
<div class="t" style="left:1078px;top:676px;width:126px;font-family:'Liberation Sans',sans-serif;font-size:8.2px;color:#d0d0d0;text-align:center;line-height:13px;height:13px">EG 0 Wand 1</div>
<div class="a" style="left:1207px;top:677px;width:93px;height:14px;border:1px solid #4c4c4c;border-bottom:none;box-sizing:border-box;background:#3a3a3a"></div>
</body></html>
